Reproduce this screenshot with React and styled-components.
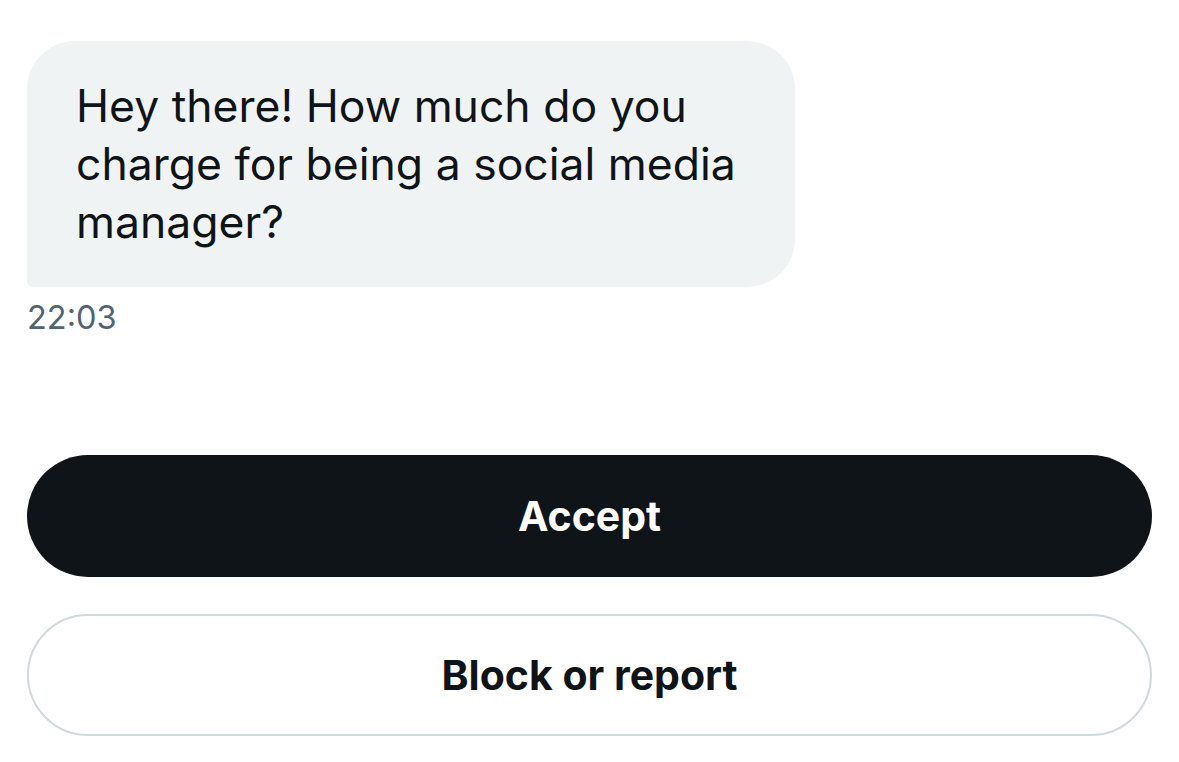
import styled, { createGlobalStyle } from "styled-components"

const GlobalStyle = createGlobalStyle`
  html, body {
    margin: 0;
    padding: 0;
    background: #ffffff;
  }
  body {
    font-family: Inter, "Noto Sans", sans-serif;
    color: #0f1419;
  }
`

const Page = styled.div`
  width: 1179px;
  height: 762px;
  box-sizing: border-box;
  padding: 41px 27px 0;
  display: flex;
  flex-direction: column;
`

const Bubble = styled.div`
  width: 768px;
  box-sizing: border-box;
  background: #eff3f4;
  border-radius: 48px 48px 48px 6px;
  padding: 36px 40px 36px 49px;
  font-size: 44.5px;
  line-height: 58px;
  color: #0f1419;
`

const Time = styled.div`
  margin-top: 11px;
  font-size: 32.5px;
  line-height: 40px;
  color: #536471;
`

const Actions = styled.div`
  margin-top: 117px;
  display: flex;
  flex-direction: column;
  gap: 37px;
`

const Button = styled.button`
  width: 100%;
  height: 122px;
  box-sizing: border-box;
  border-radius: 61px;
  font-family: Inter, "Noto Sans", sans-serif;
  font-weight: 700;
  font-size: 41px;
  cursor: pointer;
  background: ${({ $primary }) => ($primary ? "#0f1419" : "#ffffff")};
  color: ${({ $primary }) => ($primary ? "#ffffff" : "#0f1419")};
  border: ${({ $primary }) => ($primary ? "none" : "2px solid #cfd9de")};
`

export default function App() {
  return (
    <>
      <GlobalStyle />
      <Page>
        <Bubble>
          Hey there! How much do you charge for being a social media manager?
        </Bubble>
        <Time>22:03</Time>
        <Actions>
          <Button $primary>Accept</Button>
          <Button>Block or report</Button>
        </Actions>
      </Page>
    </>
  )
}
